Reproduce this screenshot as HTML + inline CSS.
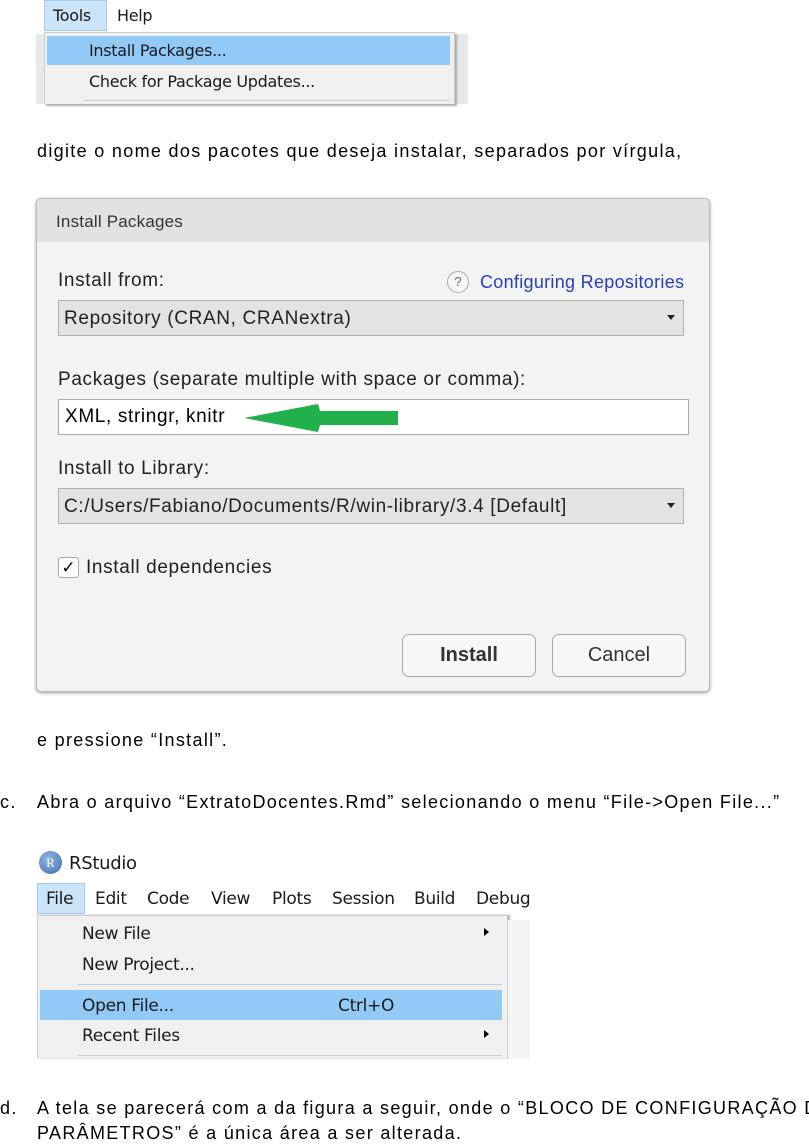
<!DOCTYPE html>
<html><head><meta charset="utf-8"><style>
*{margin:0;padding:0;box-sizing:border-box}
body{width:809px;height:1143px;background:#fff;position:relative;overflow:hidden;font-family:"Liberation Sans",sans-serif;color:#000}
.a{position:absolute;white-space:nowrap}
.t{font-size:18px;letter-spacing:1.32px}
.u{font-family:"DejaVu Sans","Liberation Sans",sans-serif;font-size:16px;color:#1a1a1a;letter-spacing:-0.3px}
.d{font-size:19px;color:#222;letter-spacing:0.65px}
.sel{background:#e3e3e3;border:1px solid #b0b0b0}
.arr{position:absolute;right:8px;top:14px;width:0;height:0;border-left:4px solid transparent;border-right:4px solid transparent;border-top:5px solid #222}
</style></head><body>

<div class="a" style="left:36px;top:0;width:432px;height:104px;background:#fff"></div>
<div class="a" style="left:36px;top:34px;width:432px;height:70px;background:#e8e8e8"></div>
<div class="a" style="left:44px;top:0;width:63px;height:31px;background:#cce4f7;border:1px solid #9fcdf3"></div>
<div class="a u" style="left:53px;top:6px">Tools</div>
<div class="a u" style="left:117px;top:6px">Help</div>
<div class="a" style="left:44px;top:32px;width:411px;height:72px;background:#f0f0f0;border:1px solid #ccc;border-bottom:none;box-shadow:2px 2px 2px #aaa"></div>
<div class="a" style="left:47px;top:36px;width:403px;height:29px;background:#91c9f7"></div>
<div class="a u" style="left:89px;top:41px">Install Packages...</div>
<div class="a u" style="left:89px;top:72px">Check for Package Updates...</div>
<div class="a" style="left:84px;top:100px;width:366px;height:1px;background:#ccc"></div>

<div class="a t" style="left:37px;top:141px">digite o nome dos pacotes que deseja instalar, separados por vírgula,</div>

<div class="a" style="left:36px;top:198px;width:674px;height:494px;background:#f2f3f3;border:1px solid #bbb;border-radius:5px;box-shadow:0 1px 3px #999"></div>
<div class="a" style="left:37px;top:199px;width:672px;height:43px;background:#e1e2e4;border-radius:5px 5px 0 0"></div>
<div class="a" style="left:56px;top:212px;font-size:17px;color:#333;letter-spacing:0.2px">Install Packages</div>
<div class="a d" style="left:58px;top:270px">Install from:</div>
<div class="a" style="left:447px;top:271px;width:22px;height:22px;border:1px solid #aaa;border-radius:50%;font-size:13px;color:#666;text-align:center;line-height:20px;background:#f6f6f6">?</div>
<div class="a" style="left:480px;top:272px;font-size:18px;color:#2b3eb8;letter-spacing:0.3px">Configuring Repositories</div>
<div class="a sel" style="left:58px;top:300px;width:626px;height:36px"><span class="a d" style="left:5px;top:7px">Repository (CRAN, CRANextra)</span><div class="arr"></div></div>
<div class="a d" style="left:58px;top:369px">Packages (separate multiple with space or comma):</div>
<div class="a" style="left:58px;top:399px;width:631px;height:36px;background:#fff;border:1px solid #aaa"></div>
<div class="a d" style="left:65px;top:406px;color:#000">XML, stringr, knitr</div>
<svg class="a" style="left:240px;top:402px" width="160" height="32"><path d="M4 16 L78 2 L80 9 L158 9 L158 23 L80 23 L78 30 Z" fill="#21b04b"/></svg>
<div class="a d" style="left:58px;top:458px">Install to Library:</div>
<div class="a sel" style="left:58px;top:488px;width:626px;height:36px"><span class="a d" style="left:5px;top:7px">C:/Users/Fabiano/Documents/R/win-library/3.4 [Default]</span><div class="arr"></div></div>
<div class="a" style="left:58px;top:557px;width:21px;height:21px;background:#fff;border:1px solid #aaa;border-radius:3px;font-size:17px;line-height:19px;text-align:center">✓</div>
<div class="a d" style="left:86px;top:557px">Install dependencies</div>
<div class="a" style="left:402px;top:634px;width:134px;height:43px;background:#f7f7f7;border:1px solid #aaa;border-radius:7px;text-align:center;line-height:41px;font-size:20px;font-weight:bold;color:#333">Install</div>
<div class="a" style="left:552px;top:634px;width:134px;height:43px;background:#f7f7f7;border:1px solid #aaa;border-radius:7px;text-align:center;line-height:41px;font-size:20px;color:#333">Cancel</div>

<div class="a t" style="left:37px;top:730px">e pressione “Install”.</div>
<div class="a t" style="left:0px;top:792px">c.</div>
<div class="a t" style="left:37px;top:792px">Abra o arquivo “ExtratoDocentes.Rmd” selecionando o menu “File-&gt;Open File...”</div>

<div class="a" style="left:36px;top:848px;width:494px;height:210px;background:#fff"></div>
<div class="a" style="left:39px;top:851px;width:23px;height:23px;border-radius:50%;background:radial-gradient(circle at 40% 35%,#8fb6e0,#3b6fb0);color:#fff;font-size:13px;text-align:center;line-height:23px;font-family:'Liberation Serif',serif">R</div>
<div class="a u" style="left:69px;top:853px;font-size:18px">RStudio</div>
<div class="a" style="left:37px;top:883px;width:48px;height:31px;background:#cce4f7;border:1px solid #9fcdf3"></div>
<div class="a u" style="left:46px;top:889px;font-size:17px">File</div>
<div class="a u" style="left:95px;top:889px;font-size:17px">Edit</div>
<div class="a u" style="left:147px;top:889px;font-size:17px">Code</div>
<div class="a u" style="left:211px;top:889px;font-size:17px">View</div>
<div class="a u" style="left:272px;top:889px;font-size:17px">Plots</div>
<div class="a u" style="left:332px;top:889px;font-size:17px">Session</div>
<div class="a u" style="left:414px;top:889px;font-size:17px">Build</div>
<div class="a u" style="left:476px;top:889px;font-size:17px;width:54px;overflow:hidden">Debug</div>
<div class="a" style="left:37px;top:915px;width:471px;height:143px;background:#f0f0f0;border:1px solid #ccc;border-bottom:none;box-shadow:2px 0 2px #aaa"></div>
<div class="a" style="left:508px;top:920px;width:22px;height:138px;background:#f4f4f4"></div>
<div class="a u" style="left:82px;top:924px;font-size:17px">New File</div>
<div class="a" style="left:484px;top:928px;border-top:4px solid transparent;border-bottom:4px solid transparent;border-left:5px solid #000"></div>
<div class="a u" style="left:82px;top:955px;font-size:17px">New Project...</div>
<div class="a" style="left:78px;top:984px;width:424px;height:1px;background:#ccc"></div>
<div class="a" style="left:40px;top:990px;width:462px;height:30px;background:#91c9f7"></div>
<div class="a u" style="left:82px;top:996px;font-size:17px">Open File...</div>
<div class="a u" style="left:338px;top:996px;font-size:17px">Ctrl+O</div>
<div class="a u" style="left:82px;top:1026px;font-size:17px">Recent Files</div>
<div class="a" style="left:484px;top:1030px;border-top:4px solid transparent;border-bottom:4px solid transparent;border-left:5px solid #000"></div>
<div class="a" style="left:78px;top:1055px;width:424px;height:1px;background:#ccc"></div>

<div class="a t" style="left:0px;top:1098px">d.</div>
<div class="a t" style="left:37px;top:1098px">A tela se parecerá com a da figura a seguir, onde o “BLOCO DE CONFIGURAÇÃO DE</div>
<div class="a t" style="left:37px;top:1123px">PARÂMETROS” é a única área a ser alterada.</div>
</body></html>
